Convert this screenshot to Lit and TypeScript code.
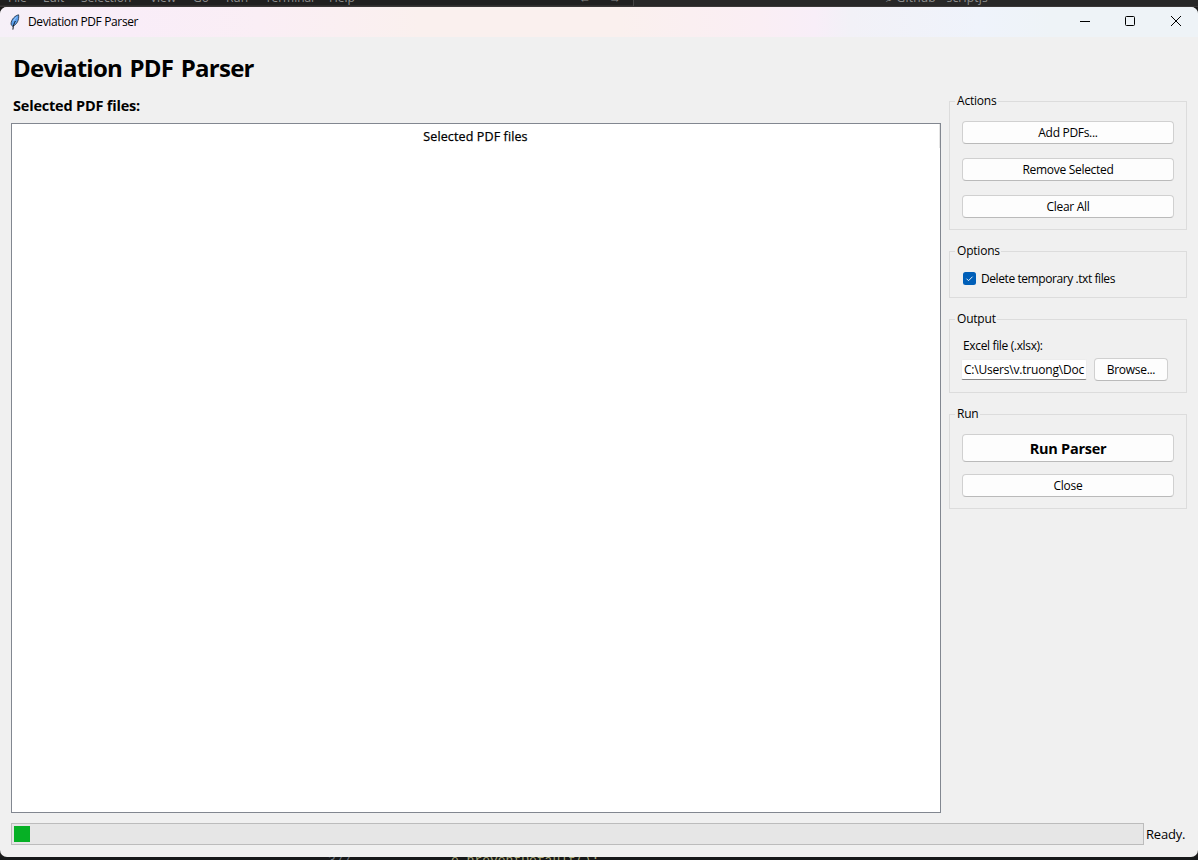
import { LitElement, html, css, svg } from "lit";
import { customElement, property, state } from "lit/decorators.js";

@customElement("group-box")
class GroupBox extends LitElement {
  @property() label = "";
  static styles = css`
    :host { display: block; box-sizing: border-box; border: 1px solid #dcdcdc; padding: 0 12px; }
    .legend { display: block; width: max-content; height: 16px; margin: -9px 0 0 -7px; padding: 0 1px 0 2px;
      background: #f0f0f0; font-size: 12px; line-height: 16px; letter-spacing: -0.2px; }
  `;
  render() {
    return html`<span class="legend">${this.label}</span><slot></slot>`;
  }
}

@customElement("app-root")
class AppRoot extends LitElement {
  @state() private deleteTemp = true;

  static styles = css`
    :host { display: flex; flex-direction: column; box-sizing: border-box; width: 1198px; height: 860px; overflow: hidden;
      background: #1b1b1b; color: #000; font-family: "Open Sans", "Noto Sans", sans-serif; font-size: 12px; }
    * { box-sizing: border-box; }
    .behind-top { height: 7px; flex: none; overflow: hidden; display: flex; background: linear-gradient(#202020 5px, #3a3737 6px); color: #8d8d8d;
      font-size: 12px; line-height: 16px; white-space: pre; }
    .behind-top span { margin-top: -10px; flex: none; }
    .menu { display: flex; width: 633px; flex: none; padding-left: 8px; letter-spacing: -0.05px; }
    .m1 { width: 35px; } .m2 { width: 38px; } .m3 { width: 69px; } .m4 { width: 43px; } .m5 { width: 33px; }
    .m6 { width: 39px; } .m7 { width: 64px; } .m8 { width: 250px; } .m9 { width: 30px; }
    .search { flex: 1; border-left: 1px solid #444; background: #282828; padding-left: 252px; display: flex; height: 6px; letter-spacing: 0.2px; }
    .window { height: 850px; flex: none; display: flex; flex-direction: column; background: #f0f0f0; border-radius: 7px; overflow: hidden; }
    .titlebar { height: 30px; flex: none; display: flex; align-items: center; padding-left: 8px;
      background: linear-gradient(90deg, #f6f0f8 0, #f9edf8 130px, #faeef5 260px, #faf0ee 420px, #faf0ee 620px, #faeef4 760px, #f8eef8 815px, #f2f1f7 850px, #eff3fb 980px, #eef3f7 1050px, #eef3f7 100%); }
    .feather { width: 14px; height: 18px; flex: none; margin-top: -1px; }
    .caption { flex: 1; margin-left: 6px; line-height: 16px; letter-spacing: -0.37px; }
    .controls { display: flex; margin-right: -2px; }
    .controls svg { width: 46px; height: 30px; display: block; }
    .body { flex: 1; display: flex; flex-direction: column; padding: 0 11px; }
    h1 { margin: 14px 0 0 2px; height: 35px; font-size: 24px; line-height: 34px; font-weight: 700; white-space: nowrap; letter-spacing: -0.75px; word-spacing: 2px; }
    .main { display: flex; height: 727px; }
    .left { width: 930px; flex: none; }
    .subtitle { height: 20px; margin: 10px 0 7px 2px; font-size: 14.5px; line-height: 20px; font-weight: 700; letter-spacing: -0.2px; }
    .files { height: 690px; border: 1px solid #828790; background: #fff; }
    .heading { height: 24px; border-right: 1px solid #e5e5e5; text-align: center; line-height: 25px; font-size: 12.5px;
      letter-spacing: 0.12px; -webkit-text-stroke: 0.25px #000; }
    .side { width: 238px; margin-left: 8px; padding-top: 15px; display: flex; flex-direction: column; gap: 21px; }
    .actions { height: 129px; } .options { height: 47px; } .output { height: 74px; } .run { height: 95px; }
    .btn { display: block; width: 212px; height: 23px; padding: 0; border: 1px solid #d0d0d0; border-bottom-color: #bababa; border-radius: 4px;
      background: #fdfdfd; font: inherit; color: #000; line-height: 21px; letter-spacing: -0.3px; text-align: center; }
    .stack { display: flex; flex-direction: column; gap: 14px; padding-top: 12px; }
    .tight { gap: 12px; }
    .big { height: 28px; padding-top: 1px; font-size: 14.5px; font-weight: 700; line-height: 25px; letter-spacing: -0.25px; }
    .check { display: flex; align-items: center; height: 16px; margin: 11px 0 0 1px; gap: 5px; letter-spacing: -0.42px; white-space: nowrap; }
    .check svg { width: 13px; height: 13px; flex: none; }
    .field-label { height: 16px; line-height: 16px; margin: 11px 0 4px 1px; letter-spacing: -0.35px; }
    .row { display: flex; align-items: center; }
    .entry { width: 126px; height: 21px; margin-left: -1px; overflow: hidden; border: 1px solid #ececec; border-bottom: 1px solid #868686;
      border-radius: 2px; background: #fff; line-height: 20px; padding: 0 2px; white-space: nowrap; letter-spacing: -0.2px; }
    .browse { width: 74px; margin-left: 7px; }
    .status { display: flex; align-items: center; margin-top: 10px; height: 22px; }
    .progress { width: 1133px; height: 22px; flex: none; border: 1px solid #bcbcbc; background: #e6e6e6; padding: 2px; }
    .bar { height: 16px; background: #06b025; }
    .ready { margin-left: 2px; font-size: 13px; letter-spacing: -0.2px; white-space: nowrap; }
    .behind-bottom { height: 3px; flex: none; overflow: hidden; display: flex; background: #17191a; white-space: pre;
      font-family: "Liberation Mono", monospace; font-size: 13px; line-height: 14px; }
    .behind-bottom span { margin-top: -3px; flex: none; }
    .num { color: #6e7681; margin-left: 328px; width: 123px; }
    .code { color: #a9a878; }
  `;

  render() {
    return html`
      <div class="behind-top">
        <div class="menu">
          ${["File", "Edit", "Selection", "View", "Go", "Run", "Terminal", "Help", "←", "→"].map(
            (t, i) => html`<span class="m${i + 1}">${t}</span>`
          )}
        </div>
        <div class="search"><span>⌕ Github - scriptjs</span></div>
      </div>
      <div class="window">
        <div class="titlebar">
          <svg class="feather" viewBox="0 0 14 18">
            <path d="M10.6 1.8 C7.6 2.4 3 6 3 11.2 L4.6 13.4 C9 11.5 11.3 7 10.6 1.8 Z" fill="#5c9fec" stroke="#1d2b3a" stroke-width=".8"/>
            <path d="M7.4 8 C6.2 10 5.3 12 4.9 16.6" fill="none" stroke="#101820" stroke-width="1"/>
            <path d="M8.6 3.8 L5.2 8.3" stroke="#a0ccf8" stroke-width="1"/>
          </svg>
          <span class="caption">Deviation PDF Parser</span>
          <div class="controls">
            <svg viewBox="0 0 46 30"><path d="M18 14.5H28" stroke="#000"/></svg>
            <svg viewBox="0 0 46 30"><rect x="17.5" y="9.5" width="9" height="9" rx="1" fill="none" stroke="#000"/></svg>
            <svg viewBox="0 0 46 30"><path d="M17 9l10 10M27 9l-10 10" stroke="#000" stroke-width="1"/></svg>
          </div>
        </div>
        <div class="body">
          <h1><span>Deviation PDF Parser</span></h1>
          <div class="main">
            <div class="left">
              <div class="subtitle"><span>Selected PDF files:</span></div>
              <div class="files"><div class="heading">Selected PDF files</div></div>
            </div>
            <div class="side">
              <group-box class="actions" label="Actions">
                <div class="stack">
                  <button class="btn">Add PDFs...</button>
                  <button class="btn">Remove Selected</button>
                  <button class="btn">Clear All</button>
                </div>
              </group-box>
              <group-box class="options" label="Options">
                <div class="check" @click=${() => (this.deleteTemp = !this.deleteTemp)}>
                  <svg viewBox="0 0 13 13">
                    <rect width="13" height="13" rx="2.5" fill="#005fb8"/>
                    ${this.deleteTemp ? svg`<path d="M3.5 6.7l2 2 4-4" fill="none" stroke="#fff" stroke-width=".9"/>` : ""}
                  </svg>
                  <span>Delete temporary .txt files</span>
                </div>
              </group-box>
              <group-box class="output" label="Output">
                <div class="field-label">Excel file (.xlsx):</div>
                <div class="row">
                  <div class="entry">C:\\Users\\v.truong\\Doc</div>
                  <button class="btn browse">Browse...</button>
                </div>
              </group-box>
              <group-box class="run" label="Run">
                <div class="stack tight">
                  <button class="btn big">Run Parser</button>
                  <button class="btn">Close</button>
                </div>
              </group-box>
            </div>
          </div>
          <div class="status">
            <div class="progress"><div class="bar" style="width:16px"></div></div>
            <span class="ready">Ready.</span>
          </div>
        </div>
      </div>
      <div class="behind-bottom"><span class="num">377</span><span class="code">e.preventDefault();</span></div>
    `;
  }
}
